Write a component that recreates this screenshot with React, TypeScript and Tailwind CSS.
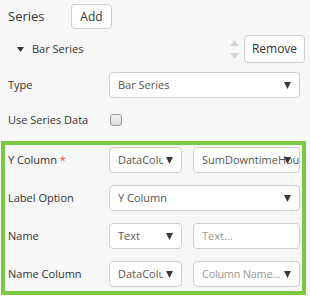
import React from "react";

// small dark triangle used in the dropdowns
function Caret() {
  return (
    <svg width="7" height="7" viewBox="0 0 7 7" className="shrink-0">
      <path d="M0 0 H7 L3.5 7 Z" fill="#3a3a3a" />
    </svg>
  );
}

function Select({
  value,
  width,
  placeholder,
  overlap,
}: {
  value: string;
  width: string;
  placeholder?: boolean;
  overlap?: boolean;
}) {
  return (
    <div
      className={`${width} relative h-[26px] flex items-center bg-white border border-[#cfcfcf] rounded-[4px] pl-[8px] pr-[8px] overflow-hidden`}
    >
      <span
        className={`whitespace-nowrap overflow-hidden ${overlap ? "flex-none" : "flex-1 min-w-0 mr-[3px]"} ${
          placeholder ? "text-[#999] tracking-[-0.3px]" : "text-[#555]"
        }`}
      >
        {value}
      </span>
      {overlap ? (
        <div className="absolute right-[8px] top-[9px] flex">
          <Caret />
        </div>
      ) : (
        <Caret />
      )}
    </div>
  );
}

function TextInput({ placeholder, width }: { placeholder: string; width: string }) {
  return (
    <div
      className={`${width} h-[26px] flex items-center bg-white border border-[#cfcfcf] rounded-[4px] pl-[8px] text-[#999]`}
    >
      {placeholder}
    </div>
  );
}

function Row({ label, required, children }: { label: string; required?: boolean; children: React.ReactNode }) {
  return (
    <div className="flex items-center h-[26px]">
      <div className="w-[101px] shrink-0 text-[#333]">
        {label}
        {required && <span className="text-[#e0474c]"> *</span>}
      </div>
      {children}
    </div>
  );
}

export default function App() {
  return (
    <div className="w-[310px] h-[296px] bg-[#f7f7f7] font-['Open_Sans',sans-serif] text-[11px] text-[#333] overflow-hidden">
      {/* Series header */}
      <div className="flex items-center pt-[4px] pl-[8px]">
        <div className="w-[63px] text-[13px] text-[#333]">Series</div>
        <button className="w-[41px] h-[25px] bg-white border border-[#cfcfcf] rounded-[4px] text-[12px] text-[#333]">
          Add
        </button>
      </div>

      {/* Bar Series item */}
      <div className="flex items-center mt-[6px] h-[28px] pl-[17px] pr-[5px]">
        <svg width="7" height="5" viewBox="0 0 7 5">
          <path d="M0 0 H7 L3.5 5 Z" fill="#333" />
        </svg>
        <span className="ml-[8px] text-[11px]">Bar Series</span>
        <div className="ml-auto flex flex-col gap-[7px] mr-[5px]">
          <svg width="9" height="6" viewBox="0 0 9 6">
            <path d="M0 6 H9 L4.5 0 Z" fill="#d4d4d4" />
          </svg>
          <svg width="9" height="6" viewBox="0 0 9 6">
            <path d="M0 0 H9 L4.5 6 Z" fill="#d4d4d4" />
          </svg>
        </div>
        <button className="w-[61px] h-[28px] bg-white border border-[#cfcfcf] rounded-[4px] text-[12px] text-[#333]">
          Remove
        </button>
      </div>

      <div className="pl-[8px]">
        <div className="mt-[9px]">
          <Row label="Type">
            <Select value="Bar Series" width="w-[191px]" />
          </Row>
        </div>
        <div className="mt-[9px]">
          <Row label="Use Series Data">
            <div className="w-[12px] h-[12px] rounded-[3px] border border-[#9a9a9a] bg-gradient-to-b from-[#f2f2f2] to-[#dcdcdc] ml-[1px]" />
          </Row>
        </div>
      </div>

      {/* highlighted block */}
      <div className="mt-[8px] ml-[1px] w-[305px] h-[154px] border-[4px] border-[#7ac943] pl-[3px] pt-[2px] flex flex-col gap-[12px]">
        <Row label="Y Column" required>
          <Select value="DataColumn" width="w-[73px]" />
          <div className="w-[11px]" />
          <Select value="SumDowntimeHours" width="w-[107px]" overlap />
        </Row>
        <Row label="Label Option">
          <Select value="Y Column" width="w-[191px]" />
        </Row>
        <Row label="Name">
          <Select value="Text" width="w-[73px]" />
          <div className="w-[11px]" />
          <TextInput placeholder="Text..." width="w-[107px]" />
        </Row>
        <Row label="Name Column">
          <Select value="DataColumn" width="w-[73px]" />
          <div className="w-[11px]" />
          <Select value="Column Name..." width="w-[107px]" placeholder overlap />
        </Row>
      </div>
    </div>
  );
}
